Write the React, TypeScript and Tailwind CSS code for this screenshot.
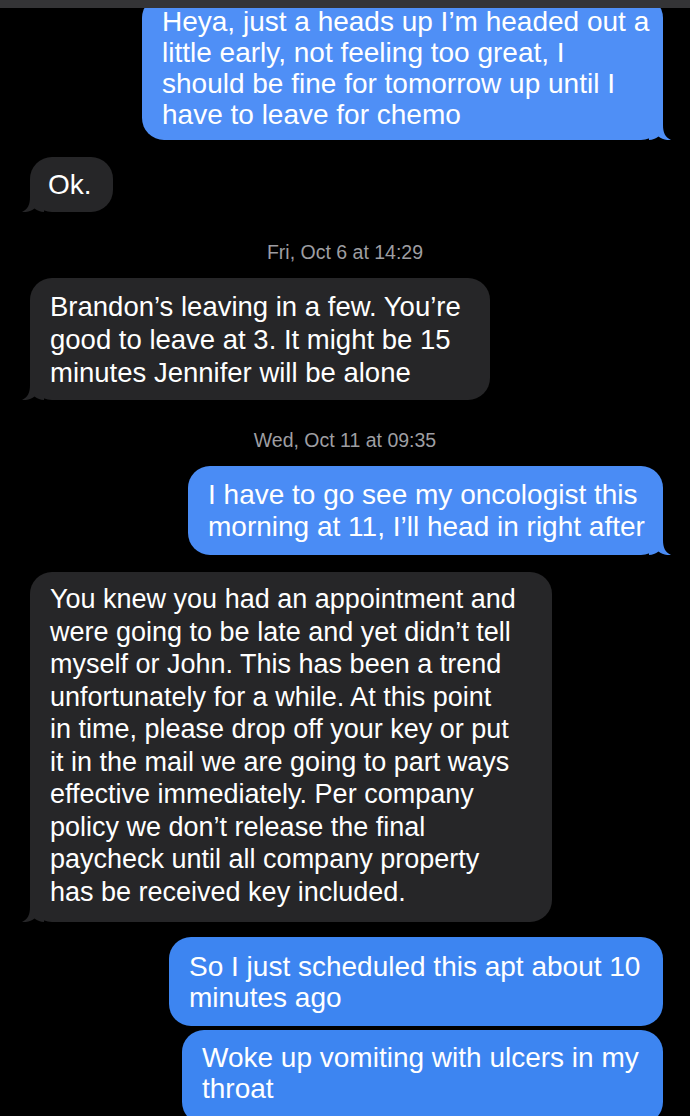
import type { ReactNode } from 'react'

type Side = 'in' | 'out'

const Tail = ({ side, color }: { side: Side; color: string }) => (
  <svg
    width="22"
    height="24"
    viewBox="0 0 22 24"
    className={
      side === 'out'
        ? 'absolute -right-2 bottom-0'
        : 'absolute -left-2 bottom-0 -scale-x-100'
    }
  >
    <path
      d="M14 0 L14 9 C14 16.5 16 21 22 24 C17 24.5 12.5 23 9.5 20.5 C6.5 22.5 3.5 24 0 24 L0 0 Z"
      fill={color}
    />
  </svg>
)

const Bubble = ({
  side,
  color,
  tail,
  className,
  lines,
}: {
  side: Side
  color: string
  tail?: boolean
  className: string
  lines: ReactNode[]
}) => {
  return (
    <div className={`flex w-full ${side === 'out' ? 'justify-end pr-[27px]' : 'justify-start pl-[30px]'}`}>
      <div className={`relative rounded-[22px] ${className}`} style={{ backgroundColor: color }}>
        {lines.map((l, i) => (
          <div key={i} className="whitespace-nowrap">
            {l}
          </div>
        ))}
        {tail && <Tail side={side} color={color} />}
      </div>
    </div>
  )
}

const Stamp = ({ text, className }: { text: string; className: string }) => (
  <div className={`text-center text-[19.5px] leading-[20px] text-[#9e9ea2] ${className}`}>{text}</div>
)

export default function App() {
  return (
    <div
      className="relative h-[1116px] w-[690px] overflow-hidden bg-black text-white"
      style={{ fontFamily: '"Liberation Sans", Arial, sans-serif' }}
    >
      {/* status strip at the very top */}
      <div className="relative z-10 h-2 w-full bg-[#343436]" />

      <div className="-mt-3 flex flex-col">
        <Bubble
          side="out"
          color="#4f8ff6"
          tail
          className="w-[521px] pl-5 pt-[10px] pb-[10px] text-[28px] leading-[31px]"
          lines={[
            'Heya, just a heads up I’m headed out a',
            'little early, not feeling too great, I',
            'should be fine for tomorrow up until I',
            'have to leave for chemo',
          ]}
        />

        <div className="mt-[17px]">
          <Bubble
            side="in"
            color="#262628"
            tail
            className="w-[83px] pl-[18px] py-3 text-[28px] leading-[31px]"
            lines={['Ok.']}
          />
        </div>

        <Stamp text="Fri, Oct 6 at 14:29" className="mt-[30px]" />

        <div className="mt-4">
          <Bubble
            side="in"
            color="#262628"
            tail
            className="w-[460px] pl-5 pt-3 pb-[11px] text-[27.5px] leading-[33px]"
            lines={[
              'Brandon’s leaving in a few. You’re',
              'good to leave at 3. It might be 15',
              'minutes Jennifer will be alone',
            ]}
          />
        </div>

        <Stamp text="Wed, Oct 11 at 09:35" className="mt-[30px]" />

        <div className="mt-4">
          <Bubble
            side="out"
            color="#4a8cf5"
            tail
            className="w-[475px] pl-5 pt-[13px] pb-3 text-[28px] leading-[32px]"
            lines={[
              'I have to go see my oncologist this',
              'morning at 11, I’ll head in right after',
            ]}
          />
        </div>

        <div className="mt-[17px]">
          <Bubble
            side="in"
            color="#262628"
            tail
            className="w-[522px] pl-5 pt-[11px] pb-[14px] text-[27px] leading-[32.5px]"
            lines={[
              'You knew you had an appointment and',
              'were going to be late and yet didn’t tell',
              'myself or John. This has been a trend',
              'unfortunately for a while. At this point',
              'in time, please drop off your key or put',
              'it in the mail we are going to part ways',
              'effective immediately. Per company',
              'policy we don’t release the final',
              'paycheck until all company property',
              'has be received key included.',
            ]}
          />
        </div>

        <div className="mt-[15px]">
          <Bubble
            side="out"
            color="#3d85f1"
            className="w-[494px] pl-5 pt-[14px] pb-[13px] text-[28px] leading-[31px]"
            lines={['So I just scheduled this apt about 10', 'minutes ago']}
          />
        </div>

        <div className="mt-1">
          <Bubble
            side="out"
            color="#3d85f1"
            className="w-[481px] pl-5 pt-[12px] pb-[20px] text-[28px] leading-[31px]"
            lines={['Woke up vomiting with ulcers in my', 'throat']}
          />
        </div>
      </div>
    </div>
  )
}
